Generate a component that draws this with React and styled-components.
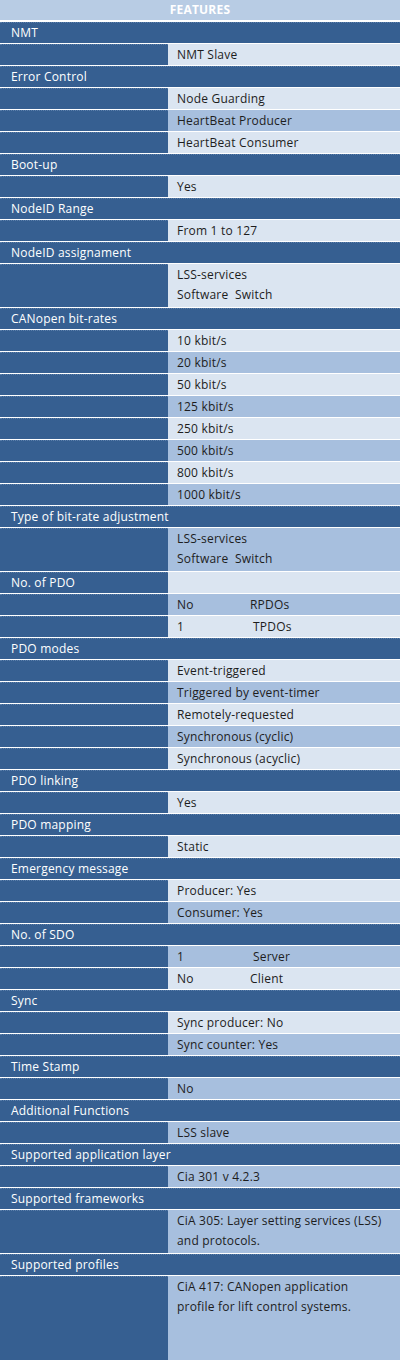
import React from 'react'
import styled, { createGlobalStyle } from 'styled-components'

const rows = [
  { section: 'NMT' },
  { text: ['NMT Slave'], tone: 'light' },
  { section: 'Error Control' },
  { text: ['Node Guarding'], tone: 'light' },
  { text: ['HeartBeat Producer'], tone: 'mid' },
  { text: ['HeartBeat Consumer'], tone: 'light' },
  { section: 'Boot-up' },
  { text: ['Yes'], tone: 'light' },
  { section: 'NodeID Range' },
  { text: ['From 1 to 127'], tone: 'light' },
  { section: 'NodeID assignament' },
  { text: ['LSS-services', 'Software  Switch'], tone: 'light' },
  { section: 'CANopen bit-rates' },
  { text: ['10 kbit/s'], tone: 'light' },
  { text: ['20 kbit/s'], tone: 'mid' },
  { text: ['50 kbit/s'], tone: 'light' },
  { text: ['125 kbit/s'], tone: 'mid' },
  { text: ['250 kbit/s'], tone: 'light' },
  { text: ['500 kbit/s'], tone: 'mid' },
  { text: ['800 kbit/s'], tone: 'light' },
  { text: ['1000 kbit/s'], tone: 'mid' },
  { section: 'Type of bit-rate adjustment' },
  { text: ['LSS-services', 'Software  Switch'], tone: 'mid' },
  { label: 'No. of PDO', text: [''], tone: 'light' },
  { pair: ['No', 'RPDOs'], offset: 73, tone: 'mid' },
  { pair: ['1', 'TPDOs'], offset: 76, tone: 'light' },
  { section: 'PDO modes' },
  { text: ['Event-triggered'], tone: 'light' },
  { text: ['Triggered by event-timer'], tone: 'mid' },
  { text: ['Remotely-requested'], tone: 'light' },
  { text: ['Synchronous (cyclic)'], tone: 'mid' },
  { text: ['Synchronous (acyclic)'], tone: 'light' },
  { section: 'PDO linking' },
  { text: ['Yes'], tone: 'light' },
  { section: 'PDO mapping' },
  { text: ['Static'], tone: 'light' },
  { section: 'Emergency message' },
  { text: ['Producer: Yes'], tone: 'light' },
  { text: ['Consumer: Yes'], tone: 'mid' },
  { section: 'No. of SDO' },
  { pair: ['1', 'Server'], offset: 76, tone: 'mid' },
  { pair: ['No', 'Client'], offset: 73, tone: 'light' },
  { section: 'Sync' },
  { text: ['Sync producer: No'], tone: 'light' },
  { text: ['Sync counter: Yes'], tone: 'mid' },
  { section: 'Time Stamp' },
  { text: ['No'], tone: 'mid' },
  { section: 'Additional Functions' },
  { text: ['LSS slave'], tone: 'mid' },
  { section: 'Supported application layer' },
  { text: ['Cia 301 v 4.2.3'], tone: 'mid' },
  { section: 'Supported frameworks' },
  { text: ['CiA 305: Layer setting services (LSS)', 'and protocols.'], tone: 'mid' },
  { section: 'Supported profiles' },
  { text: ['CiA 417: CANopen application', 'profile for lift control systems.'], tone: 'mid', fill: true },
]

function App() {
  return (
    <>
      <GlobalStyle />
      <Table>
        <Header>FEATURES</Header>
        {rows.map((row, i) => {
          if (row.section) return <Section key={i}>{row.section}</Section>
          const lines = row.pair ? 1 : row.text.length
          return (
            <Row key={i} $lines={lines} $fill={row.fill}>
              <LeftCell>{row.label}</LeftCell>
              <ValueCell $tone={row.tone}>
                {row.pair ? (
                  <Pair>
                    <PairKey $w={row.offset}>{row.pair[0]}</PairKey>
                    <span>{row.pair[1]}</span>
                  </Pair>
                ) : (
                  row.text.map((t, j) => <Line key={j}>{t}</Line>)
                )}
              </ValueCell>
            </Row>
          )
        })}
      </Table>
    </>
  )
}

export default App

const GlobalStyle = createGlobalStyle`
  html, body {
    margin: 0;
    padding: 0;
    background: #fff;
  }
  body {
    font-family: "Open Sans", "Liberation Sans", sans-serif;
    font-size: 12px;
  }
`;

const Table = styled.div`
	display: flex;
	flex-direction: column;
	gap: 1px;
	width: 400px;
	height: 1360px;
	background: #fff;
`;

const Header = styled.div`
	height: 20px;
	margin-bottom: 1px;
	background: #b8cce4;
	color: #fff;
	font-weight: 700;
	font-size: 12px;
	line-height: 20px;
	text-align: center;
	letter-spacing: 0.2px;
`;

const Section = styled.div`
	flex: none;
	height: 21px;
	padding-left: 11px;
	background: #365f91;
	border-top: 1px dotted #5b7fab;
	box-sizing: border-box;
	color: #fff;
	line-height: 19px;
	letter-spacing: 0.2px;
`;

const Row = styled.div`
	display: grid;
	grid-template-columns: 168px 1fr;
	min-height: ${p => p.$lines * 22 - 1}px;
	flex: ${p => (p.$fill ? '1' : 'none')};
`;

const LeftCell = styled.div`
	background: #365f91;
	border-top: 1px dotted #5b7fab;
	padding-left: 11px;
	color: #fff;
	line-height: 19px;
	letter-spacing: 0.2px;
`;

const ValueCell = styled.div`
	background: ${p => (p.$tone === 'mid' ? '#a7bfde' : '#dbe5f1')};
	padding: 1px 0 0 9px;
	color: #1d1d1d;
	letter-spacing: 0.2px;
`;

const Line = styled.div`
	height: 20px;
	line-height: 20px;
	white-space: pre;
`;

const Pair = styled.div`
	display: flex;
	line-height: 20px;
`;

const PairKey = styled.span`
	width: ${p => p.$w}px;
`;
